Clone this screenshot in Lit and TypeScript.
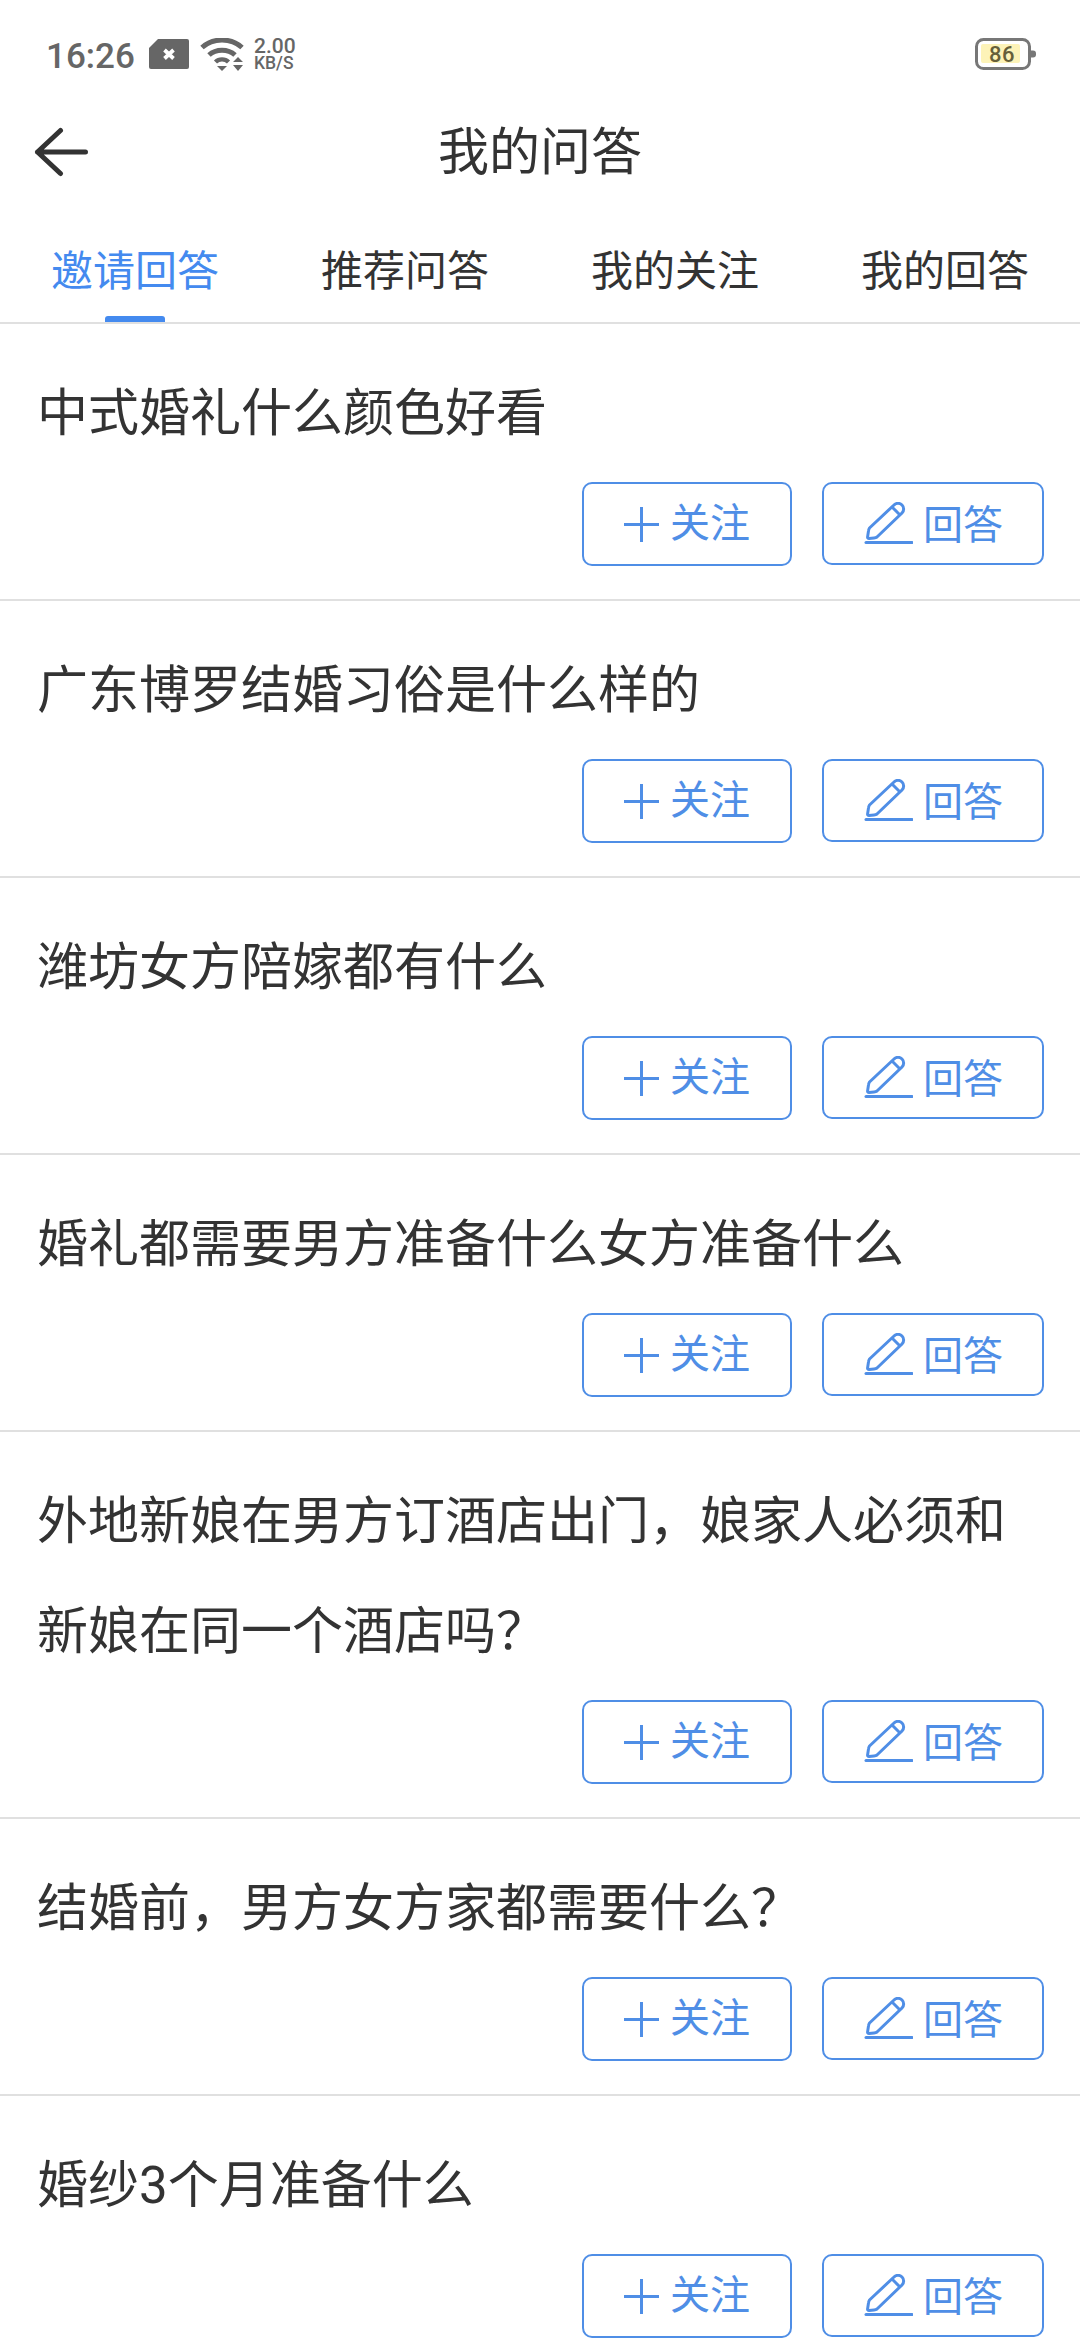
import { LitElement, html, css } from "lit";
import { customElement } from "lit/decorators.js";

const ITEMS = [
  "中式婚礼什么颜色好看",
  "广东博罗结婚习俗是什么样的",
  "潍坊女方陪嫁都有什么",
  "婚礼都需要男方准备什么女方准备什么",
  "外地新娘在男方订酒店出门，娘家人必须和新娘在同一个酒店吗？",
  "结婚前，男方女方家都需要什么？",
  "婚纱3个月准备什么",
];
const TABS = ["邀请回答", "推荐问答", "我的关注", "我的回答"];

@customElement("app-root")
export class AppRoot extends LitElement {
  static styles = css`
    :host {
      display: block;
      width: 1080px;
      height: 2340px;
      overflow: hidden;
      background: #fff;
      font-family: "Roboto", "Noto Sans CJK SC", sans-serif;
      color: #333;
    }
    .status {
      height: 108px;
      box-sizing: border-box;
      padding: 36px 43px 0 46px;
      display: flex;
      align-items: flex-start;
      color: #666;
    }
    .time { font-size: 35px; line-height: 41px; font-weight: 500; width: 103px; }
    .sim { width: 40px; height: 30px; margin-top: 3px; }
    .wifi { width: 44px; height: 34px; margin-left: 11px; margin-top: 2px; }
    .speed { margin-left: 10px; margin-top: 0; font-weight: 500; color: #666; }
    .speed div:first-child { font-size: 21px; line-height: 20px; }
    .speed div:last-child { font-size: 17.5px; line-height: 15px; }
    .battery { margin-left: auto; width: 62px; height: 32px; margin-top: 2px; position: relative; }
    .battery svg { display: block; }
    .battery span {
      position: absolute; left: 1px; width: 52px; top: 0; line-height: 33px; text-align: center;
      font-size: 22px; font-weight: 500; color: #665f3a; letter-spacing: 0.5px;
    }
    .nav { height: 86px; position: relative; display: flex; align-items: center; justify-content: center; }
    .nav .title { font-size: 51px; color: #333; line-height: 89px; height: 86px; }
    .back { position: absolute; left: 33px; top: 17px; width: 56px; height: 52px; }
    .tabs {
      height: 128px;
      display: grid;
      grid-template-columns: repeat(4, 270px);
      border-bottom: 2px solid #e0e0e0;
    }
    .tab { position: relative; text-align: center; font-size: 42px; line-height: 156px; height: 128px; color: #333; }
    .tab.on { color: #448aef; }
    .tab.on::after {
      content: ""; position: absolute; left: 105px; bottom: 0; width: 60px; height: 6px;
      background: #448aef; border-radius: 3px 3px 0 0;
    }
    .row { padding: 35px 36px 33px 37px; border-bottom: 2px solid #e0e0e0; }
    .q { font-size: 51px; line-height: 110px; color: #333; }
    .actions { display: flex; justify-content: flex-end; align-items: flex-start; gap: 30px; margin-top: 13px; height: 84px; }
    .btn {
      box-sizing: border-box; border: 2px solid #4f8ee6; border-radius: 10px;
      display: flex; align-items: center; justify-content: center; color: #4f8ee6; font-size: 40px;
    }
    .btn.follow { width: 210px; height: 84px; gap: 11px; }
    .btn.answer { width: 222px; height: 83px; gap: 10px; }
    .btn svg { display: block; flex: none; }
    .btn span { line-height: 48px; }
    .btn.answer span { padding-top: 5px; }
  `;

  render() {
    return html`
      <div class="status">
        <div class="time">16:26</div>
        <svg class="sim" viewBox="0 0 40 30">
          <path d="M9 0H38a2 2 0 0 1 2 2V28a2 2 0 0 1-2 2H2a2 2 0 0 1-2-2V9z" fill="#666"/>
          <path d="M15.500 11l9 8.500M24.500 11l-9 8.500" stroke="#fff" stroke-width="3.800" fill="none"/>
        </svg>
        <svg class="wifi" viewBox="0 0 44 34">
          <path d="M2 9.500C13 -0.500 31 -0.500 42 9.500" stroke="#666" stroke-width="5" fill="none"/>
          <path d="M9 17C16 10.500 28 10.500 35 17" stroke="#666" stroke-width="5" fill="none"/>
          <path d="M15.500 24C19 20.500 25 20.500 28.500 24" stroke="#666" stroke-width="4.400" fill="none"/>
          <path d="M17 28H27L22 33z" fill="#666"/>
          <path d="M33 24l5-5 5 5zM33 27h10l-5 6z" fill="#666"/>
        </svg>
        <div class="speed"><div>2.00</div><div>KB/S</div></div>
        <div class="battery">
          <svg width="62" height="32" viewBox="0 0 62 32">
            <rect x="1.500" y="1.500" width="53" height="29" rx="7" fill="#fff" stroke="#777" stroke-width="3"/>
            <rect x="6" y="6" width="39" height="19" rx="2" fill="#fdf3b8"/>
            <path d="M56 12.500h2a3 3 0 0 1 3 3v1a3 3 0 0 1-3 3h-2z" fill="#777"/>
          </svg>
          <span>86</span>
        </div>
      </div>
      <div class="nav">
        <svg class="back" viewBox="0 0 56 52">
          <path d="M52.500 27H4.500M27.500 5.500L4.500 27l23 21.500" stroke="#333" stroke-width="5" stroke-linecap="round" stroke-linejoin="round" fill="none"/>
        </svg>
        <div class="title">我的问答</div>
      </div>
      <div class="tabs">
        ${TABS.map((t, i) => html`<div class="tab ${i === 0 ? "on" : ""}">${t}</div>`)}
      </div>
      ${ITEMS.map(
        (q) => html`
          <div class="row">
            <div class="q">${q}</div>
            <div class="actions">
              <div class="btn follow">
                <svg width="35" height="35" viewBox="0 0 35 35"><path d="M17.500 0V35M0 17.500H35" stroke="#4f8ee6" stroke-width="3" fill="none"/></svg>
                <span>关注</span>
              </div>
              <div class="btn answer">
                <svg width="50" height="43" viewBox="0 0 50 43">
                  <g transform="translate(2 0)">
                  <path d="M4.500 26L29 3a5.600 5.600 0 0 1 8 8L12 35q-1 .8-3 1L4 36.500q-1.600 0-1.400-1.600l.9-6q.2-1.600 1-2.900z" stroke="#4f8ee6" stroke-width="3" fill="none" stroke-linejoin="round"/>
                  <path d="M27 5l8 8" stroke="#4f8ee6" stroke-width="3" fill="none"/>
                  <path d="M1 40.500H47" stroke="#4f8ee6" stroke-width="3" stroke-linecap="round" fill="none"/>
                  </g>
                </svg>
                <span>回答</span>
              </div>
            </div>
          </div>
        `
      )}
    `;
  }
}
